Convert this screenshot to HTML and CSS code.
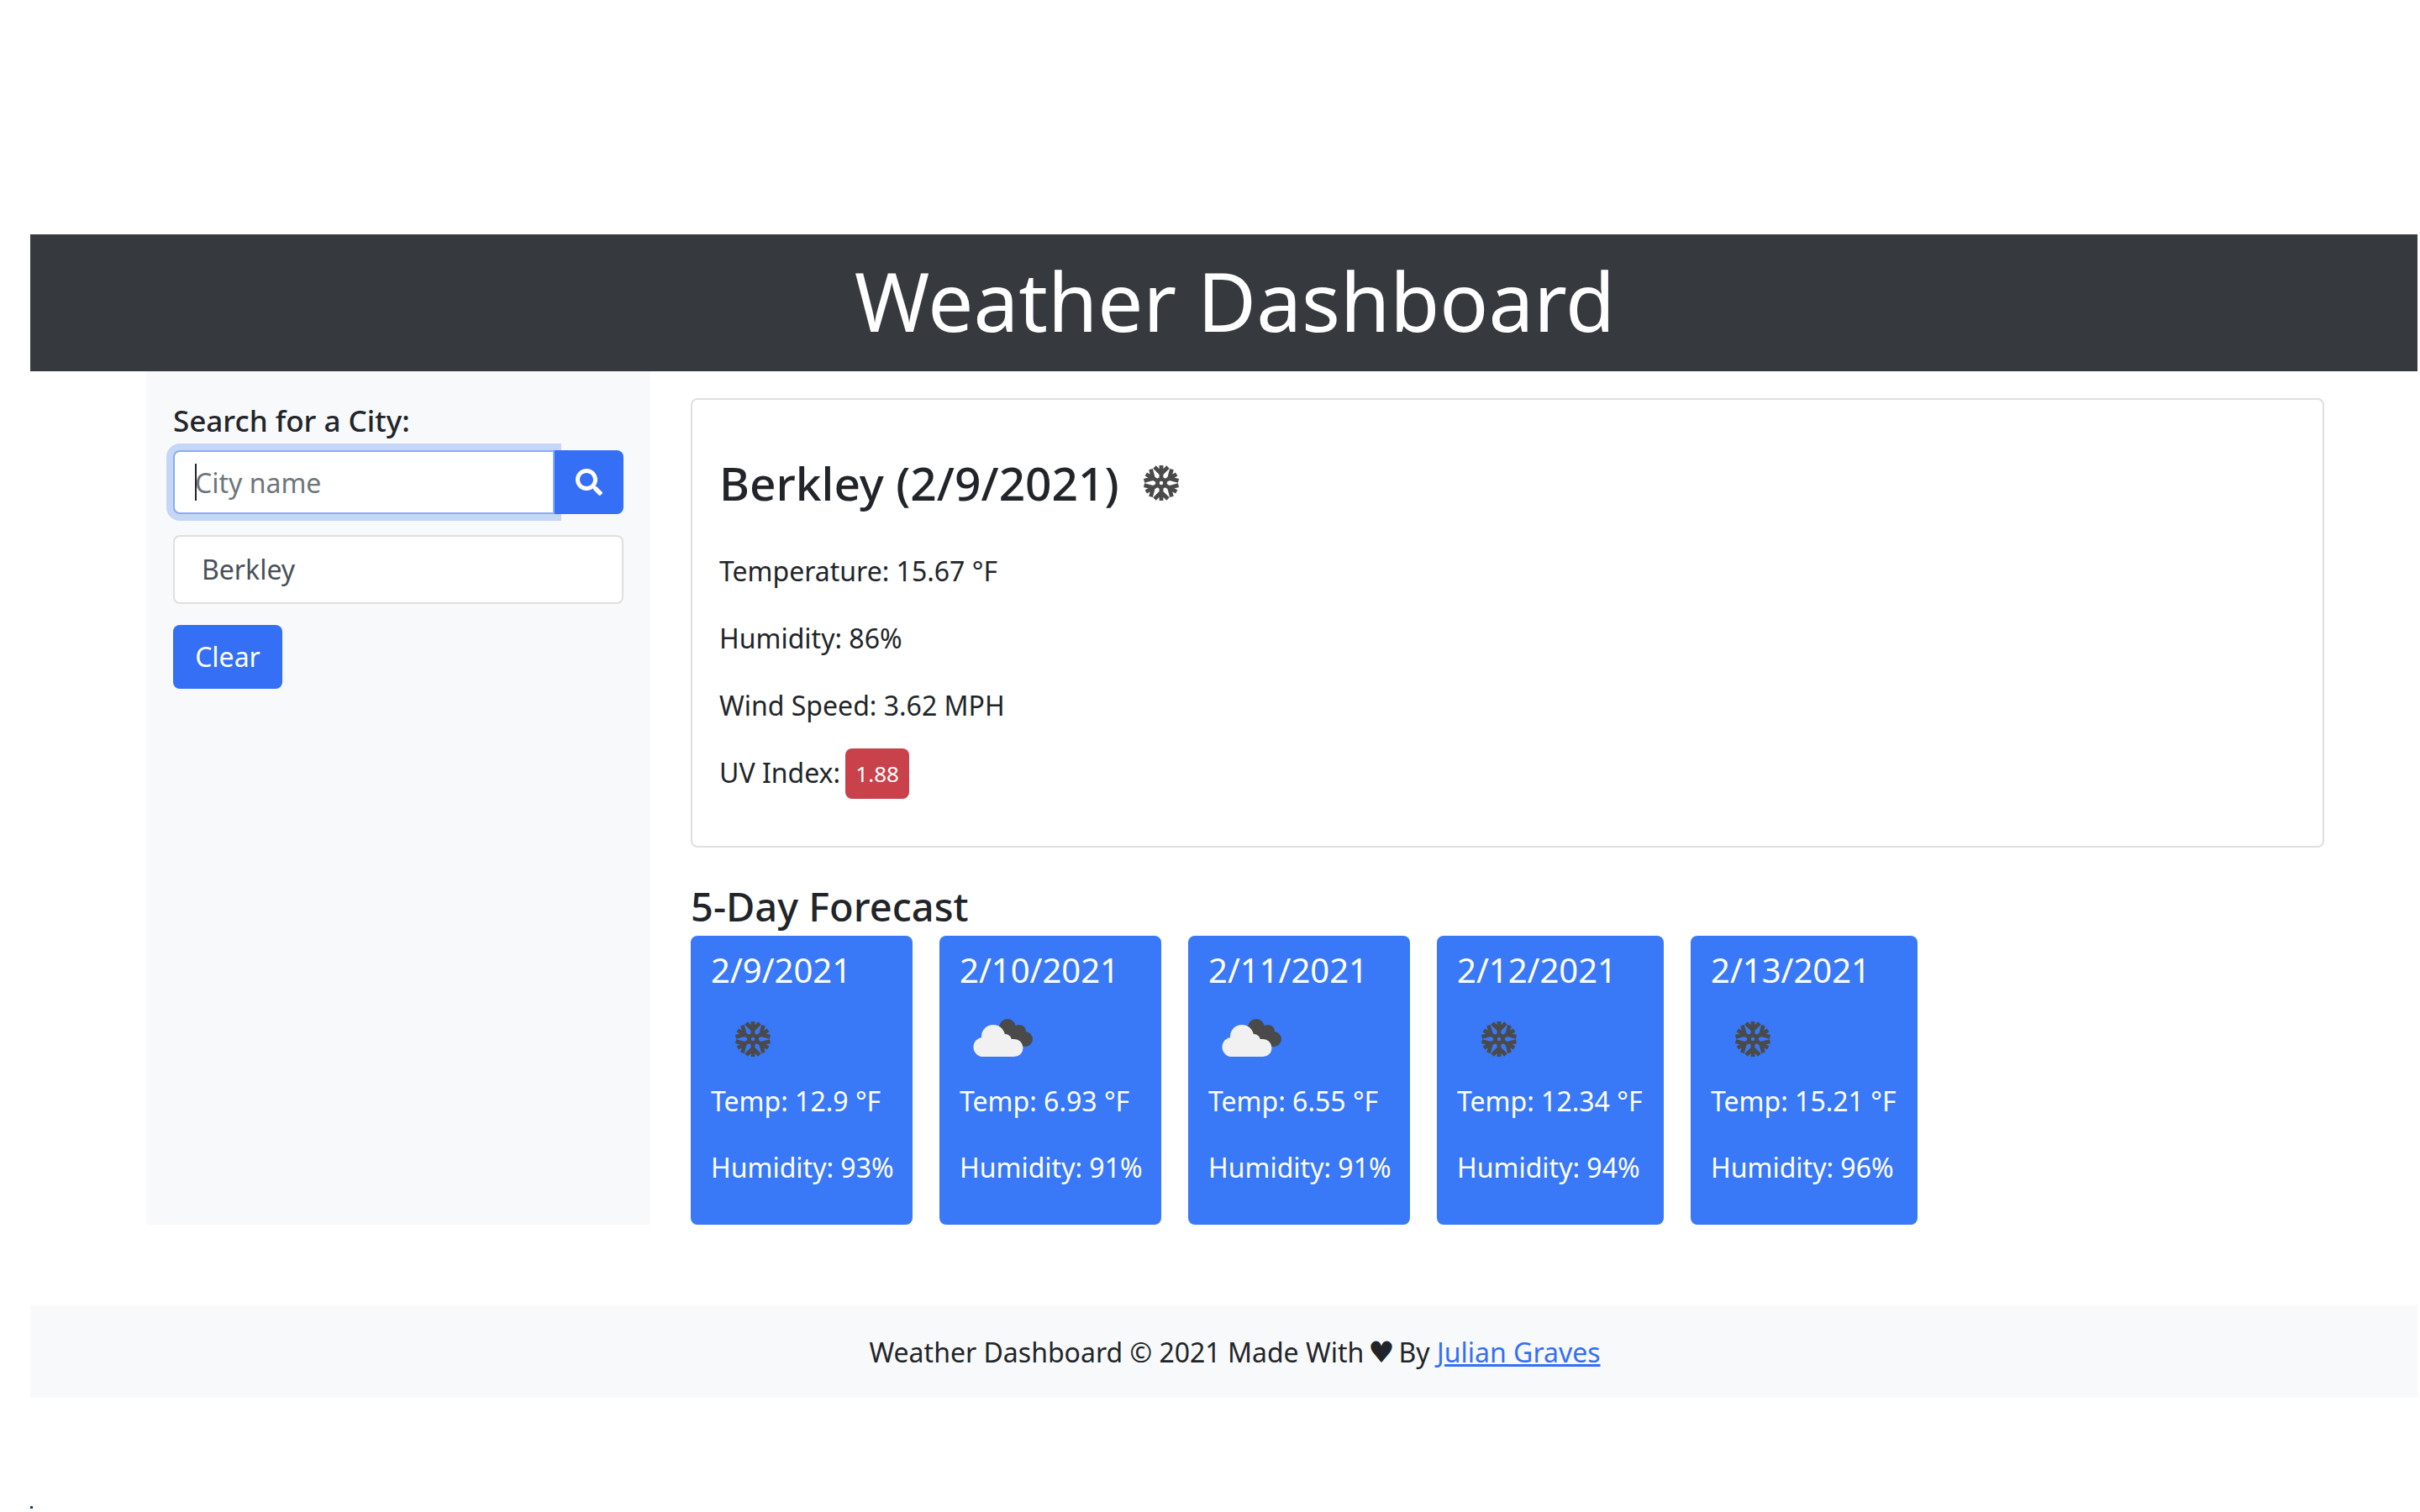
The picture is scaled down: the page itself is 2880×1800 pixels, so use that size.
FILE: index.html
```html
<!DOCTYPE html>
<html>
<head>
    <title>Weather Dashboard</title>
    <meta name="viewport" content="width=device-width, initial-scale=1">
    <link rel="stylesheet" href="styles.css">
</head>
<body>
    <!-- shared weather icons -->
    <svg class="icon-defs" aria-hidden="true">
        <symbol id="snow" viewBox="0 0 100 100">
            <g fill="none" stroke="#4a4a4a" stroke-width="4.8">
                <circle cx="50" cy="50" r="4.6"/>
                <g id="arm">
                    <path d="M50 45V29M50 39l-8-8M50 39l8-8"/>
                </g>
                <use href="#arm" transform="rotate(60 50 50)"/>
                <use href="#arm" transform="rotate(120 50 50)"/>
                <use href="#arm" transform="rotate(180 50 50)"/>
                <use href="#arm" transform="rotate(240 50 50)"/>
                <use href="#arm" transform="rotate(300 50 50)"/>
            </g>
        </symbol>
        <symbol id="clouds" viewBox="0 0 100 100">
            <g fill="#4a4a4a">
                <circle cx="57" cy="36" r="10"/>
                <circle cx="71" cy="41" r="8"/>
                <circle cx="78" cy="50" r="9"/>
                <path d="M50 34L70 34 85 52 70 62 50 50z"/>
            </g>
            <g fill="#f1f1f1">
                <circle cx="40" cy="47" r="14"/>
                <circle cx="28" cy="59.500" r="11.500"/>
                <circle cx="65" cy="60.500" r="10.500"/>
                <circle cx="54" cy="52" r="8"/>
                <path d="M28 50H65V71H28z"/>
            </g>
        </symbol>
    </svg>

    <header class="site-header">
        <h1>Weather Dashboard</h1>
    </header>

    <div class="content">
        <aside class="sidebar">
            <label class="search-label" for="city">Search for a City:</label>
            <div class="search-group">
                <input class="search-input" type="text" id="city" placeholder="City name">
                <span class="caret"></span>
                <button class="btn search-btn" type="button">
                    <svg class="search-icon" viewBox="0 0 512 512"><path fill="#fff" d="M505 442.7L405.3 343c-4.5-4.5-10.6-7-17-7H372c27.6-35.3 44-79.7 44-128C416 93.1 322.9 0 208 0S0 93.1 0 208s93.1 208 208 208c48.3 0 92.7-16.4 128-44v16.3c0 6.4 2.5 12.5 7 17l99.7 99.7c9.4 9.4 24.6 9.4 33.9 0l28.3-28.3c9.4-9.4 9.4-24.6.1-34zM208 336c-70.7 0-128-57.2-128-128 0-70.7 57.2-128 128-128 70.7 0 128 57.2 128 128 0 70.7-57.2 128-128 128z"/></svg>
                </button>
            </div>
            <div class="history-item">Berkley</div>
            <button class="btn clear-btn" type="button">Clear</button>
        </aside>

        <main class="main">
            <section class="current">
                <div class="current-title">
                    <h2>Berkley (2/9/2021)</h2>
                    <svg class="weather-icon"><use href="#snow"/></svg>
                </div>
                <p>Temperature: 15.67 °F</p>
                <p>Humidity: 86%</p>
                <p>Wind Speed: 3.62 MPH</p>
                <p class="uv-row">UV Index: <span class="uv-badge">1.88</span></p>
            </section>

            <h3 class="forecast-title">5-Day Forecast</h3>
            <div class="forecast">
                <div class="day">
                    <h4>2/9/2021</h4>
                    <svg class="weather-icon"><use href="#snow"/></svg>
                    <p>Temp: 12.9 °F</p>
                    <p>Humidity: 93%</p>
                </div>
                <div class="day">
                    <h4>2/10/2021</h4>
                    <svg class="weather-icon"><use href="#clouds"/></svg>
                    <p>Temp: 6.93 °F</p>
                    <p>Humidity: 91%</p>
                </div>
                <div class="day">
                    <h4>2/11/2021</h4>
                    <svg class="weather-icon"><use href="#clouds"/></svg>
                    <p>Temp: 6.55 °F</p>
                    <p>Humidity: 91%</p>
                </div>
                <div class="day">
                    <h4>2/12/2021</h4>
                    <svg class="weather-icon"><use href="#snow"/></svg>
                    <p>Temp: 12.34 °F</p>
                    <p>Humidity: 94%</p>
                </div>
                <div class="day">
                    <h4>2/13/2021</h4>
                    <svg class="weather-icon"><use href="#snow"/></svg>
                    <p>Temp: 15.21 °F</p>
                    <p>Humidity: 96%</p>
                </div>
            </div>
        </main>
    </div>

    <footer class="site-footer">
        Weather Dashboard © 2021 Made With <span class="heart">♥</span> By <a href="#">Julian Graves</a>
    </footer>
    <div class="stray-dot"></div>
</body>
</html>
```

FILE: styles.css
```css
body {
    margin: 0 0 0 36px;
    padding-top: 279px;
    width: 2841px;
    background-color: #fff;
    color: #212529;
    font-family: "Noto Sans", "Open Sans", sans-serif;
    font-size: 32px;
    line-height: 48px;
}

h1, h2, h3, h4, p {
    margin: 0;
    font-weight: 400;
}

p {
    margin-bottom: 32px;
}

.icon-defs {
    position: absolute;
    width: 0;
    height: 0;
}

/* Dark title bar */
.site-header {
    height: 163px;
    padding-left: 26px;
    background-color: #363a3f;
    color: #fff;
    text-align: center;
}

.site-header h1 {
    font-size: 96px;
    line-height: 157px;
}

/* Sidebar and main column */
.content {
    display: flex;
    margin-left: 138px;
}

.sidebar {
    box-sizing: border-box;
    width: 600px;
    height: 1016px;
    padding: 35px 32px 0;
    background-color: #f8f9fa;
}

.search-label {
    display: block;
    margin-bottom: 11px;
    font-size: 35px;
    font-weight: 500;
}

.search-group {
    position: relative;
    display: flex;
    height: 76px;
}

.search-input {
    box-sizing: border-box;
    width: 454px;
    height: 76px;
    padding: 0 24px;
    border: 2px solid #86aef5;
    border-radius: 8px 0 0 8px;
    outline: none;
    box-shadow: 0 0 0 8px #c5d6f6;
    font: inherit;
}

.search-input::placeholder {
    color: #6c757d;
}

.caret {
    position: absolute;
    left: 26px;
    top: 16px;
    width: 2px;
    height: 44px;
    background-color: #212529;
}

.btn {
    border: none;
    background-color: #346ff5;
    color: #fff;
    font: inherit;
}

.search-btn {
    position: relative;
    display: flex;
    align-items: center;
    justify-content: center;
    width: 82px;
    height: 76px;
    padding: 0;
    border-radius: 0 8px 8px 0;
}

.search-icon {
    width: 32px;
    height: 32px;
}

.history-item {
    box-sizing: border-box;
    height: 82px;
    margin-top: 25px;
    padding: 15px 32px;
    border: 2px solid #dfdfdf;
    border-radius: 8px;
    background-color: #fff;
    color: #495057;
}

.clear-btn {
    display: block;
    width: 130px;
    height: 76px;
    margin-top: 25px;
    border-radius: 8px;
}

.main {
    width: 1944px;
    margin-left: 48px;
    padding-top: 32px;
}

/* Current weather card */
.current {
    box-sizing: border-box;
    height: 535px;
    padding: 49px 32px 0;
    border: 2px solid #dfdfdf;
    border-radius: 8px;
}

.current-title {
    display: flex;
    align-items: center;
    height: 100px;
    margin-bottom: 31px;
}

.current-title h2 {
    padding-bottom: 2px;
    font-size: 55px;
    font-weight: 500;
    line-height: 67px;
}

.weather-icon {
    display: block;
    flex: none;
    width: 100px;
    height: 100px;
    filter: blur(0.5px);
}

.uv-row {
    display: flex;
    align-items: center;
    gap: 6px;
    height: 60px;
    margin-top: -6px;
}

.uv-badge {
    display: block;
    position: relative;
    top: 1px;
    width: 76px;
    height: 60px;
    border-radius: 8px;
    background-color: #c9414a;
    color: #fff;
    font-size: 26px;
    line-height: 60px;
    text-align: center;
}

/* Forecast cards */
.forecast-title {
    margin-top: 42px;
    margin-bottom: 7px;
    font-size: 47px;
    font-weight: 500;
    line-height: 56px;
}

.forecast {
    display: grid;
    grid-template-columns: 264px 264px 264px 270px 270px;
    gap: 32px;
}

.day {
    box-sizing: border-box;
    height: 344px;
    padding: 17px 24px 0;
    border-radius: 8px;
    background-color: #3979f7;
    color: #fff;
    white-space: nowrap;
}

.day h4 {
    font-size: 40px;
    line-height: 48px;
    margin-bottom: 8px;
}

.day p {
    margin-bottom: 31px;
}

/* Footer */
.site-footer {
    height: 110px;
    margin-top: 96px;
    padding-left: 26px;
    background-color: #f8f9fa;
    line-height: 111px;
    text-align: center;
}

.site-footer a {
    color: #346ff5;
}

.heart {
    margin: 0 -3.4px;
    font-family: "DejaVu Sans", sans-serif;
    font-size: 35px;
}

.stray-dot {
    width: 3px;
    height: 3px;
    margin-top: 129px;
    background-color: #1d3c5c;
}
```
